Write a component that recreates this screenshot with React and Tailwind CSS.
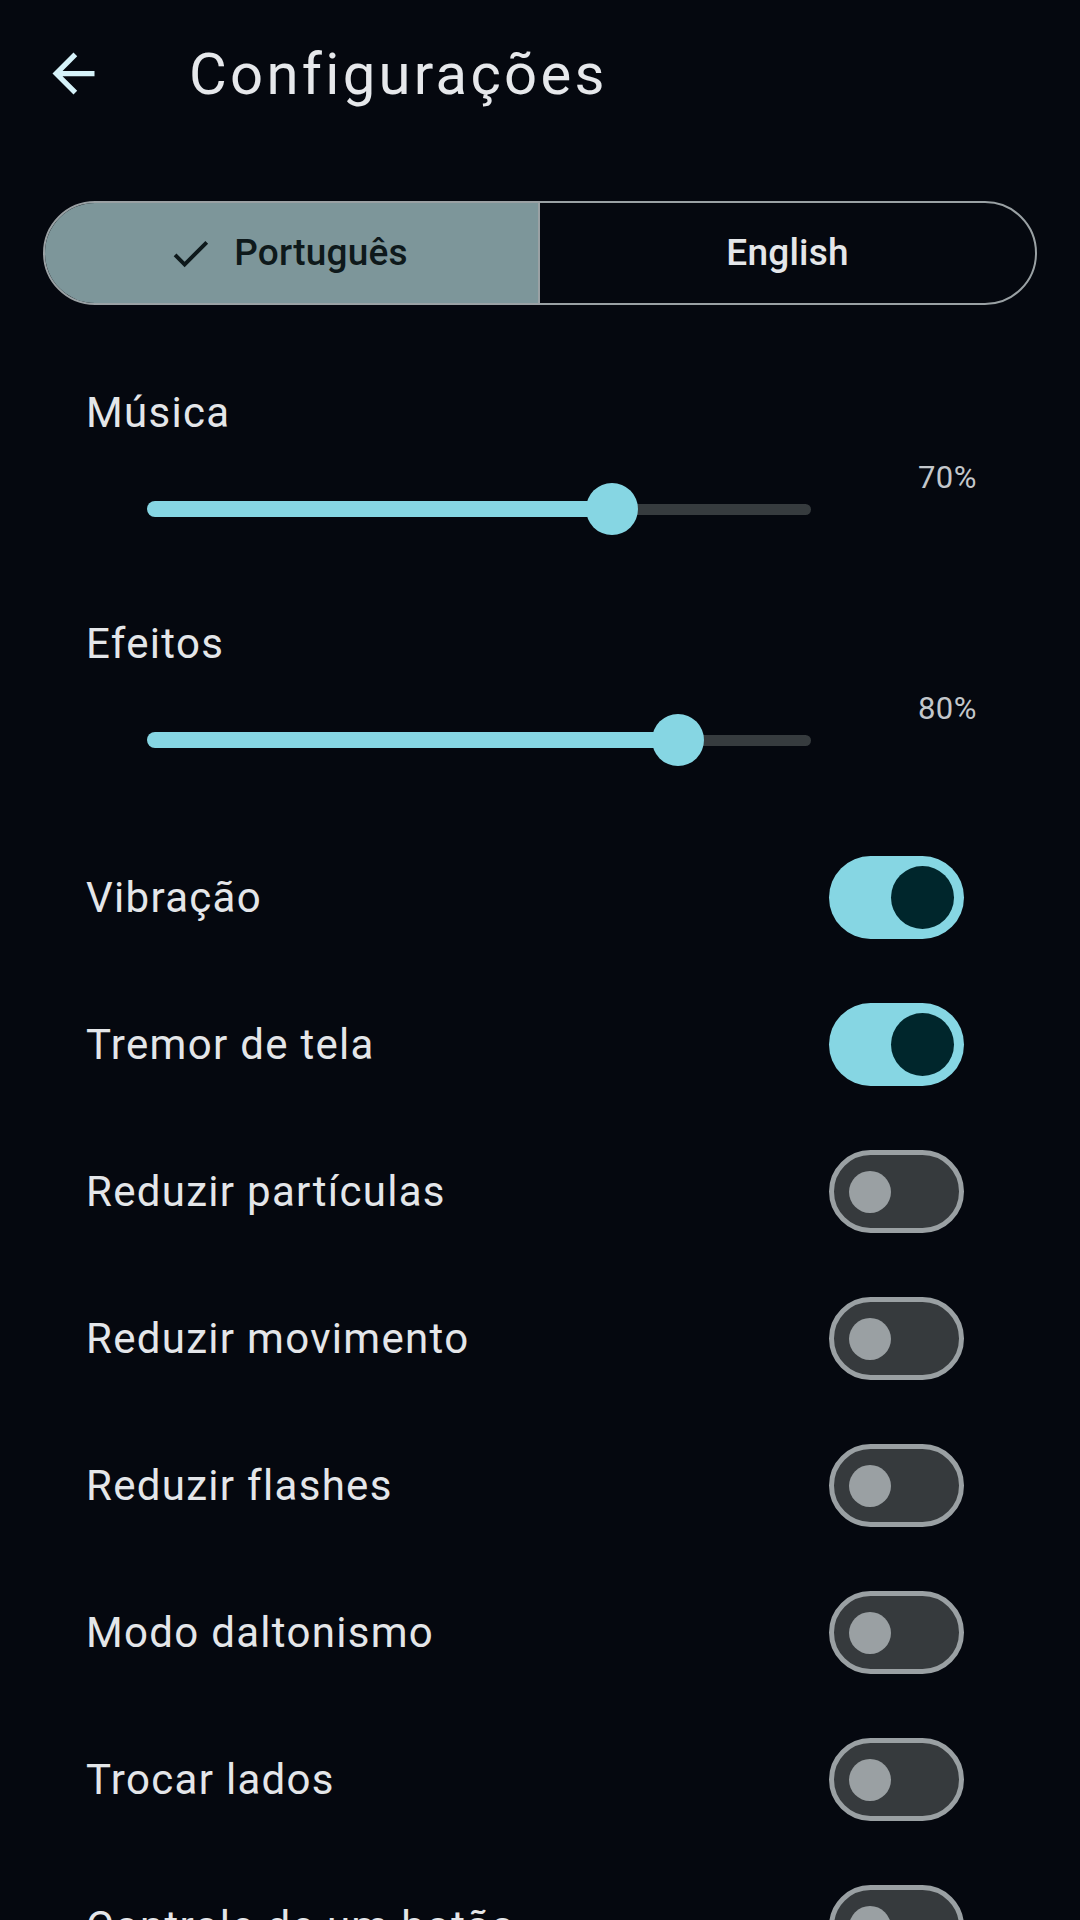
import React, { useState } from 'react';

const toggles = [
  { id: 'vib', label: 'Vibração', on: true },
  { id: 'shake', label: 'Tremor de tela', on: true },
  { id: 'particles', label: 'Reduzir partículas', on: false },
  { id: 'motion', label: 'Reduzir movimento', on: false },
  { id: 'flashes', label: 'Reduzir flashes', on: false },
  { id: 'color', label: 'Modo daltonismo', on: false },
  { id: 'swap', label: 'Trocar lados', on: false },
  { id: 'onebtn', label: 'Controle de um botão', on: false },
];

const ArrowBack = () => (
  <svg viewBox="0 0 24 24" className="w-[63px] h-[63px] shrink-0" fill="#d6f2f9">
    <path d="M20 11H7.83l5.59-5.59L12 4l-8 8 8 8 1.41-1.41L7.83 13H20v-2z" />
  </svg>
);

const Check = () => (
  <svg viewBox="0 0 24 24" className="w-[47px] h-[47px] shrink-0" fill="#0e191b">
    <path d="M9 16.17L4.83 12l-1.42 1.41L9 19 21 7l-1.41-1.41L9 16.17z" />
  </svg>
);

const SliderRow = ({ label, value }) => (
  <div>
    <div className="h-[56px] pl-[86px] text-[42px] leading-[56px] tracking-[1.3px] text-[#e4e6e9]">{label}</div>
    <div className="mt-[21px] flex items-start">
      <div className="relative ml-[147px] mt-[21px] h-[52px] w-[664px]">
        {/* track */}
        <div className="absolute left-0 top-[18px] h-[16px] rounded-full bg-[#86d6e3]" style={{ width: `${value}%` }} />
        <div
          className="absolute right-0 top-[21px] h-[11px] rounded-r-full bg-[#363b3e]"
          style={{ left: `${value}%` }}
        />
        <div
          className="absolute top-0 h-[52px] w-[52px] rounded-full bg-[#86d6e3]"
          style={{ left: `calc(${value}% - 26px)` }}
        />
      </div>
      <span className="ml-[107px] h-[32px] text-[31px] leading-[32px] tracking-[0.4px] text-[#c3c7cb]">{value}%</span>
    </div>
  </div>
);

const Switch = ({ on, onClick }) =>
  on ? (
    <button onClick={onClick} className="flex h-[83px] w-[135px] shrink-0 items-center justify-end rounded-full bg-[#86d6e3] pr-[10px]">
      <span className="h-[63px] w-[63px] rounded-full bg-[#00262c]" />
    </button>
  ) : (
    <button onClick={onClick} className="flex h-[83px] w-[135px] shrink-0 items-center rounded-full border-[5px] border-[#9aa0a3] bg-[#363a3d] pl-[15px]">
      <span className="h-[42px] w-[42px] rounded-full bg-[#9aa0a3]" />
    </button>
  );

const App = () => {
  const [lang, setLang] = useState('pt');
  const [state, setState] = useState(() => Object.fromEntries(toggles.map((t) => [t.id, t.on])));

  return (
    <div className="h-[1920px] w-[1080px] overflow-hidden bg-[#05080f] font-['Roboto','Noto_Sans',sans-serif]">
      {/* Top bar */}
      <div className="flex h-[147px] items-center pl-[42px]">
        <ArrowBack />
        <h1 className="ml-[84px] text-[58px] leading-none font-normal tracking-[3.3px] text-[#e6e8eb]">Configurações</h1>
      </div>

      {/* Language segmented button */}
      <div className="mx-[43px] mt-[54px] flex h-[104px] w-[994px] overflow-hidden rounded-full border-2 border-[#9aa1a4]">
        <button
          onClick={() => setLang('pt')}
          className={`flex w-1/2 shrink-0 items-center justify-center gap-[20px] border-r-2 border-[#9aa1a4] pr-[8px] ${lang === 'pt' ? 'bg-[#7d969a] text-[#0e191b]' : 'text-[#e4e6e9]'}`}
        >
          {lang === 'pt' && <Check />}
          <span className="text-[37px] font-medium tracking-[0.2px]">Português</span>
        </button>
        <button
          onClick={() => setLang('en')}
          className={`flex w-1/2 shrink-0 items-center justify-center gap-[20px] ${lang === 'en' ? 'bg-[#7d969a] text-[#0e191b]' : 'text-[#e4e6e9]'}`}
        >
          {lang === 'en' && <Check />}
          <span className="text-[37px] font-medium tracking-[0.2px]">English</span>
        </button>
      </div>

      {/* Volume */}
      <div className="mt-[80px]">
        <SliderRow label="Música" value={70} />
      </div>
      <div className="mt-[81px]">
        <SliderRow label="Efeitos" value={80} />
      </div>

      {/* Toggles */}
      <div className="mt-[58px]">
        {toggles.map((t) => (
          <div key={t.id} className="flex h-[147px] items-center justify-between pl-[86px] pr-[116px]">
            <span className="text-[42px] leading-[56px] tracking-[1.3px] text-[#e4e6e9]">{t.label}</span>
            <Switch on={state[t.id]} onClick={() => setState((p) => ({ ...p, [t.id]: !p[t.id] }))} />
          </div>
        ))}
      </div>
    </div>
  );
};

export default App;
